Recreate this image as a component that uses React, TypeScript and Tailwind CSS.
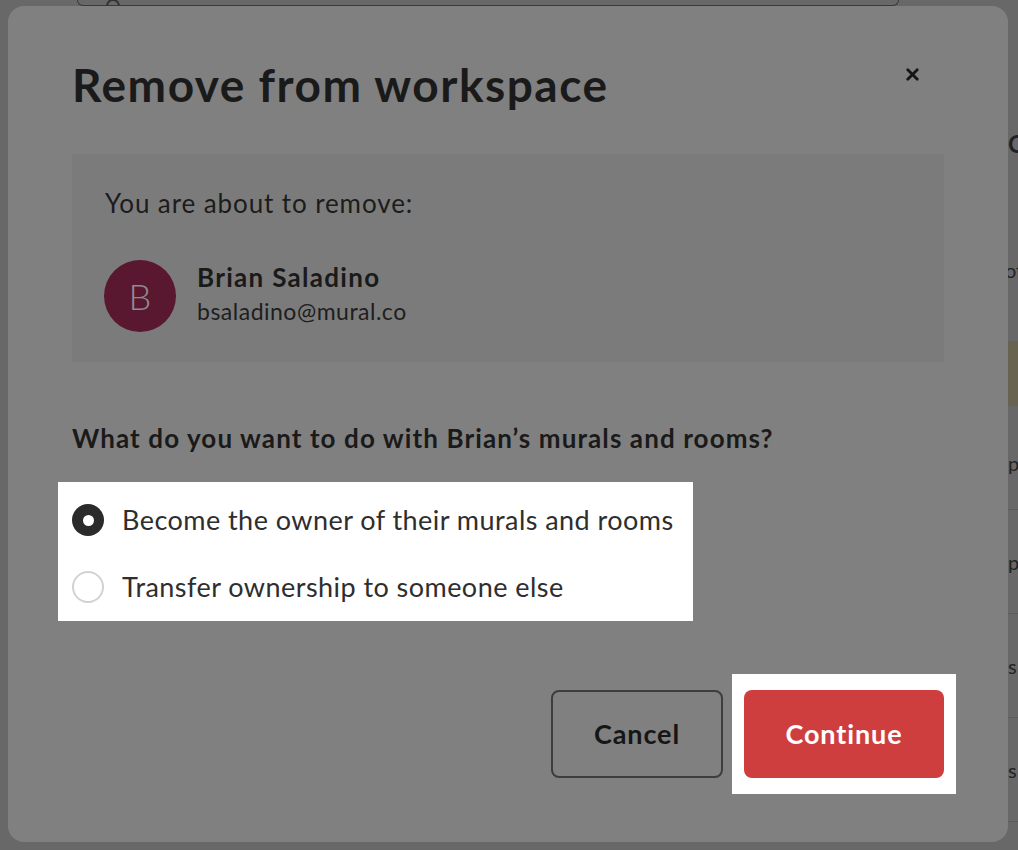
import { X } from 'lucide-react'

const font = { fontFamily: 'Lato, "Liberation Sans", sans-serif' }

const Background = () => {
  return (
    <div className="flex min-h-screen w-full overflow-hidden bg-[#686868]">
      {/* left part of the page, mostly under the dialog */}
      <div className="w-[1008px] shrink-0">
        <div className="-mt-[40px] ml-[77px] flex h-[46px] w-[822px] items-end rounded-b-md border-x border-b border-[#3a3a3a] px-[28px]">
          <div className="mb-[-8px] h-[14px] w-[14px] rounded-full border-2 border-[#333]" />
        </div>
      </div>
      {/* right panel peeking out */}
      <div className="-ml-[3px] flex flex-1 flex-col whitespace-nowrap text-[#222]" style={font}>
        <div className="mt-[128px] pl-[3px] text-[24px] font-bold leading-[32px]">Co</div>
        <div className="mt-[96px] text-[20px] leading-[28px]">of</div>
        <div className="mt-[57px] h-[65px] bg-[#676350]" />
        <div className="flex h-[104px] items-center border-b border-[#5c5c5c] pl-[3px] pt-[11px] text-[20px]">p</div>
        <div className="flex h-[104px] items-center border-b border-[#5c5c5c] pl-[3px] text-[20px]">p</div>
        <div className="flex h-[104px] items-center border-b border-[#5c5c5c] pl-[3px] text-[20px]">s</div>
        <div className="flex h-[104px] items-center border-b border-[#5c5c5c] pl-[3px] text-[20px]">s</div>
      </div>
    </div>
  )
}

const RemoveDialog = () => {
  return (
    <div
      className="fixed left-[8px] top-[6px] flex w-[1000px] flex-col rounded-[16px] bg-[#808080] px-[64px] pb-[48px] pt-[55px]"
      style={font}
    >
      {/* Header */}
      <div className="flex items-start justify-between">
        <h1 className="text-[46px] font-bold leading-[48px] tracking-[1.5px] text-[#1a1a1a]">Remove from workspace</h1>
        <button className="mr-[22px] mt-[3px] flex h-[20px] w-[20px] items-center justify-center text-[#151515]">
          <X className="h-[19px] w-[19px]" strokeWidth={3.5} />
        </button>
      </div>

      {/* User box */}
      <div className="mt-[45px] flex flex-col bg-[#7b7b7b] px-[32px] pb-[30px] pt-[35px]">
        <p className="pl-[1px] text-[26px] leading-[28px] tracking-[0.9px] text-[#1c1c1c]">You are about to remove:</p>
        <div className="mt-[43px] flex items-center gap-[21px]">
          <div className="flex h-[72px] w-[72px] items-center justify-center rounded-full bg-[#5a1830] text-[36px] font-light text-[#8d8d8d]">
            B
          </div>
          <div className="mb-[6px] flex flex-col">
            <span className="text-[26px] font-bold leading-[30px] tracking-[1.3px] text-[#1a1a1a]">Brian Saladino</span>
            <span className="mt-[6px] text-[23px] leading-[26px] tracking-[0.5px] text-[#1e1e1e]">bsaladino@mural.co</span>
          </div>
        </div>
      </div>

      {/* Question */}
      <p className="mt-[62px] text-[26px] font-bold leading-[28px] tracking-[1.1px] text-[#1a1a1a]">
        What do you want to do with Brian’s murals and rooms?
      </p>

      <div className="-mx-[14px] mt-[30px] flex w-[635px] flex-col gap-[35px] bg-white pb-[18px] pl-[14px] pr-[20px] pt-[22px]">
        <label className="flex h-[32px] items-center gap-[18px]">
          <span className="flex h-[32px] w-[32px] shrink-0 items-center justify-center rounded-full bg-[#2b2b2b]">
            <span className="h-[11px] w-[11px] rounded-full bg-white" />
          </span>
          <span className="whitespace-nowrap text-[27px] tracking-[0.45px] text-[#2e2e2e]">Become the owner of their murals and rooms</span>
        </label>
        <label className="flex h-[32px] items-center gap-[18px]">
          <span className="h-[32px] w-[32px] shrink-0 rounded-full border-2 border-[#d2d2d2]" />
          <span className="whitespace-nowrap text-[27px] tracking-[0.45px] text-[#2e2e2e]">Transfer ownership to someone else</span>
        </label>
      </div>

      {/* Actions */}
      <div className="mt-[53px] flex items-center justify-end gap-[9px]">
        <button className="flex h-[88px] w-[172px] items-center justify-center rounded-[8px] border-2 border-[#3d3d3d] text-[27px] font-bold tracking-[0.9px] text-[#161616]">
          Cancel
        </button>
        <div className="-mr-[12px] bg-white px-[12px] py-[16px]">
          <button className="flex h-[88px] w-[200px] items-center justify-center rounded-[8px] bg-[#cf3e3e] text-[27px] font-bold tracking-[0.9px] text-white">
            Continue
          </button>
        </div>
      </div>
    </div>
  )
}

export default function App() {
  return (
    <div className="relative min-h-screen">
      <Background />
      <RemoveDialog />
    </div>
  )
}
